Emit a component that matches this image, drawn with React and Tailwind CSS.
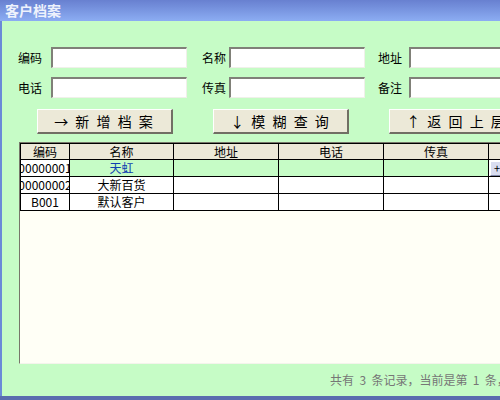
const font = "font-['Noto_Sans_CJK_SC',sans-serif]";

const Field = ({ label, labelW, ml }) => (
  <div className={`flex items-center ${ml}`}>
    <span className={`${labelW} text-[12px] text-black leading-none`}>{label}</span>
    <input
      type="text"
      className="w-[136px] h-[21px] shrink-0 bg-white border-t-2 border-l-2 border-b border-r border-t-[#808078] border-l-[#808078] border-b-[#f0f0ea] border-r-[#f0f0ea] outline-none"
    />
  </div>
);

const Btn = ({ children, ml }) => (
  <button
    className={`${ml} w-[136px] h-[25px] shrink-0 bg-[#ece9d8] border-t border-l border-b-2 border-r-2 border-t-white border-l-white border-b-[#716f64] border-r-[#716f64] text-[14px] tracking-[2px] text-black flex items-center justify-center leading-none`}
  >
    {children}
  </button>
);

const rows = [
  { code: '00000001', name: '天虹', sel: true },
  { code: '00000002', name: '大新百货' },
  { code: 'B001', name: '默认客户' },
];

const cols = ['编码', '名称', '地址', '电话', '传真', ''];
const widths = ['w-[49px]', 'w-[104px]', 'w-[105px]', 'w-[105px]', 'w-[105px]', 'w-[60px]'];

export default function App() {
  return (
    <div className={`w-[500px] h-[400px] overflow-hidden bg-[#c6fcc6] flex flex-col ${font}`}>
      <div className="h-[21px] shrink-0 bg-gradient-to-b from-[#6880d0] to-[#8cadf3] text-[#eef2fc] font-bold text-[14px] leading-[21px] pl-[5px] whitespace-nowrap">
        客户档案
      </div>
      <div className="flex h-[375px] shrink-0">
        <div className="w-[2px] bg-[#6b8ad8] shrink-0" />
        <div className="flex-1 flex flex-col min-w-0">
          <div className="flex pl-[16px] mt-[26px] whitespace-nowrap">
            <Field label="编码" labelW="w-[33px]" ml="" />
            <Field label="名称" labelW="w-[27px]" ml="ml-[15px]" />
            <Field label="地址" labelW="w-[31px]" ml="ml-[13px]" />
          </div>
          <div className="flex pl-[16px] mt-[9px] whitespace-nowrap">
            <Field label="电话" labelW="w-[33px]" ml="" />
            <Field label="传真" labelW="w-[27px]" ml="ml-[15px]" />
            <Field label="备注" labelW="w-[31px]" ml="ml-[13px]" />
          </div>
          <div className="flex pl-[35px] mt-[11px] whitespace-nowrap">
            <Btn ml="">→ 新 增 档 案</Btn>
            <Btn ml="ml-[40px]">↓ 模 糊 查 询</Btn>
            <Btn ml="ml-[40px]">↑ 返 回 上 层</Btn>
          </div>
          <div className="ml-[17px] mt-[8px] h-[222px] w-[560px] shrink-0 bg-[#fffff6] border-l border-t border-l-[#77776a] border-t-[#77776a] border-b border-b-[#f4f4ec]">
            <table className="table-fixed border-collapse text-[12px] text-black">
              <thead>
                <tr className="h-[16px]">
                  {cols.map((c, i) => (
                    <th
                      key={i}
                      className={`${widths[i]} border border-black bg-[#ece9d8] font-normal leading-none p-0 text-center`}
                    >
                      {c}
                    </th>
                  ))}
                </tr>
              </thead>
              <tbody>
                {rows.map((r) => (
                  <tr key={r.code} className="h-[17px]">
                    <td className="border border-black p-0 bg-white">
                      <div className="w-[48px] overflow-hidden flex justify-center leading-none whitespace-nowrap">
                        {r.code}
                      </div>
                    </td>
                    <td className={`border border-black p-0 text-center leading-none ${r.sel ? 'bg-[#c6fcc6] text-[#1040b0]' : 'bg-white'}`}>
                      {r.name}
                    </td>
                    <td className={`border border-black p-0 ${r.sel ? 'bg-[#c6fcc6]' : 'bg-white'}`} />
                    <td className={`border border-black p-0 ${r.sel ? 'bg-[#c6fcc6]' : 'bg-white'}`} />
                    <td className={`border border-black p-0 ${r.sel ? 'bg-[#c6fcc6]' : 'bg-white'}`} />
                    <td className="border border-black p-0 bg-white">
                      {r.sel && (
                        <div className="h-[15px] ml-[1px] bg-[#d9ddf0] border-t border-l border-t-white border-l-white border-b border-b-[#8088a8] text-[11px] leading-[13px] pl-[3px]">
                          +
                        </div>
                      )}
                    </td>
                  </tr>
                ))}
              </tbody>
            </table>
          </div>
          <div className="flex-1 flex items-center pl-[328px] text-[12px] text-[#767676] whitespace-pre">
            共有  3  条记录，当前是第  1  条，共  1  页
          </div>
        </div>
      </div>
      <div className="h-[4px] shrink-0 bg-[#5a6cae]" />
    </div>
  );
}
